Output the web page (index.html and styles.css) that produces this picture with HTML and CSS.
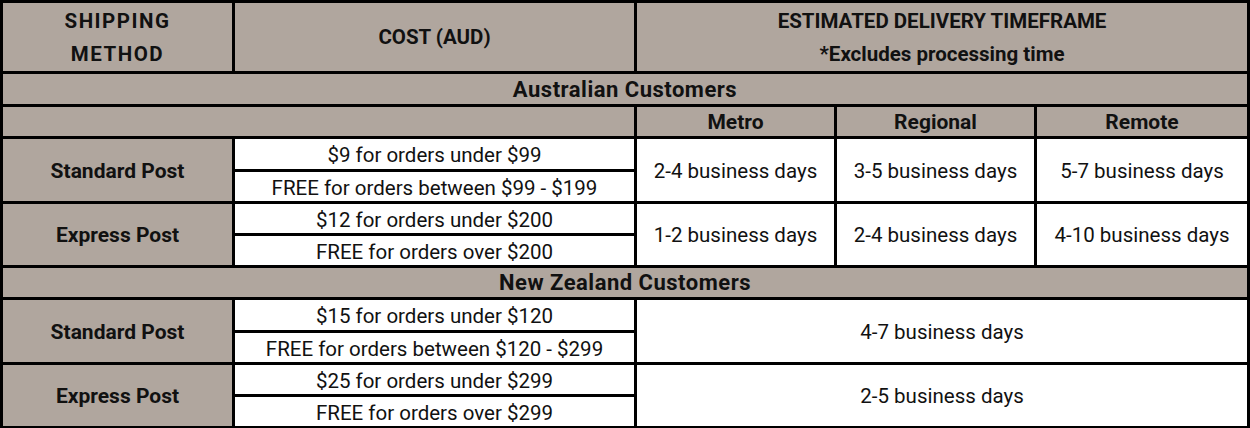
FILE: index.html
```html
<!DOCTYPE html>
<html lang="en">
<head>
<meta charset="utf-8">
<title>Shipping</title>
<link rel="stylesheet" href="styles.css">
</head>
<body>
<table class="ship">
  <colgroup>
    <col class="c1"><col class="c2"><col class="c3"><col class="c4"><col class="c5">
  </colgroup>
  <tr class="r-head">
    <th class="hd hd-wide">SHIPPING<br>METHOD</th>
    <th class="hd">COST (AUD)</th>
    <th class="hd" colspan="3">ESTIMATED DELIVERY TIMEFRAME<br>*Excludes processing time</th>
  </tr>
  <tr class="r-a">
    <th class="sec" colspan="5">Australian Customers</th>
  </tr>
  <tr class="r-b">
    <th class="sub" colspan="2"></th>
    <th class="sub">Metro</th>
    <th class="sub">Regional</th>
    <th class="sub">Remote</th>
  </tr>
  <tr class="r-a">
    <th class="method" rowspan="2">Standard Post</th>
    <td class="cost">$9 for orders under $99</td>
    <td class="days" rowspan="2">2-4 business days</td>
    <td class="days" rowspan="2">3-5 business days</td>
    <td class="days" rowspan="2">5-7 business days</td>
  </tr>
  <tr class="r-b">
    <td class="cost">FREE for orders between $99 - $199</td>
  </tr>
  <tr class="r-b">
    <th class="method" rowspan="2">Express Post</th>
    <td class="cost">$12 for orders under $200</td>
    <td class="days" rowspan="2">1-2 business days</td>
    <td class="days" rowspan="2">2-4 business days</td>
    <td class="days" rowspan="2">4-10 business days</td>
  </tr>
  <tr class="r-b">
    <td class="cost">FREE for orders over $200</td>
  </tr>
  <tr class="r-b">
    <th class="sec" colspan="5">New Zealand Customers</th>
  </tr>
  <tr class="r-a">
    <th class="method" rowspan="2">Standard Post</th>
    <td class="cost">$15 for orders under $120</td>
    <td class="days" colspan="3" rowspan="2">4-7 business days</td>
  </tr>
  <tr class="r-b">
    <td class="cost">FREE for orders between $120 - $299</td>
  </tr>
  <tr class="r-b">
    <th class="method" rowspan="2">Express Post</th>
    <td class="cost">$25 for orders under $299</td>
    <td class="days" colspan="3" rowspan="2">2-5 business days</td>
  </tr>
  <tr class="r-b">
    <td class="cost">FREE for orders over $299</td>
  </tr>
</table>
</body>
</html>
```

FILE: styles.css
```css
html, body {
  margin: 0;
  padding: 0;
  background: #ffffff;
}

body {
  font-family: Roboto, "Liberation Sans", sans-serif;
  color: #111111;
  width: 1250px;
  height: 428px;
  overflow: hidden;
}

.ship {
  border-collapse: collapse;
  table-layout: fixed;
  width: 1250px;
  border: 3px solid #000;
}

.c1 { width: 232px; }
.c2 { width: 402px; }
.c3 { width: 200px; }
.c4 { width: 200px; }
.c5 { width: 213px; }

.ship th,
.ship td {
  border: 3px solid #000;
  padding: 1px 0 0;
  text-align: center;
  vertical-align: middle;
  white-space: nowrap;
}

.ship th {
  background: #b0a69e;
  font-weight: 700;
  font-size: 21px;
  line-height: 26px;
}

.r-head { height: 71px; }
.r-a { height: 33px; }
.r-b { height: 32px; }

.ship .hd {
  font-size: 20.5px;
  line-height: 33px;
}

.ship .hd-wide {
  letter-spacing: 1.5px;
}

.ship .sec {
  font-size: 22px;
  letter-spacing: 0.5px;
}

.ship .sub {
  font-size: 21px;
}

.ship .method {
  font-size: 21px;
}

.ship .cost {
  background: #fff;
  font-size: 20.5px;
  line-height: 26px;
  padding-top: 2px;
}

.ship .days {
  background: #fff;
  font-size: 20.5px;
}
```
